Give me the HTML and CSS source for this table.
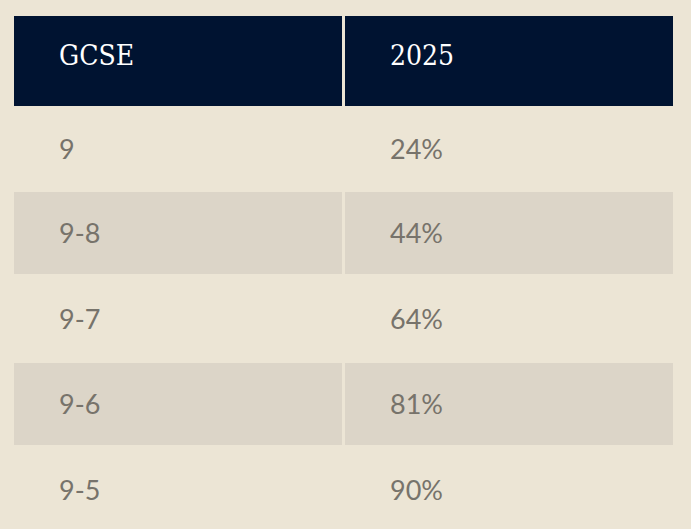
FILE: index.html
```html
<!DOCTYPE html>
<html lang="en">
<head>
<meta charset="utf-8">
<title>GCSE results</title>
<link rel="stylesheet" href="styles.css">
</head>
<body>
<div class="results">
  <div class="cell head">GCSE</div>
  <div class="cell head">2025</div>

  <div class="cell">9</div>
  <div class="cell">24%</div>

  <div class="cell shade">9-8</div>
  <div class="cell shade">44%</div>

  <div class="cell">9-7</div>
  <div class="cell">64%</div>

  <div class="cell shade">9-6</div>
  <div class="cell shade">81%</div>

  <div class="cell">9-5</div>
  <div class="cell">90%</div>
</div>
</body>
</html>
```

FILE: styles.css
```css
html, body {
  background: #ece5d5;
}

body {
  margin: 8px;
  overflow: hidden;
}

.results {
  display: grid;
  grid-template-columns: 328px 328px;
  grid-template-rows: 90px 86px 82px 89px 82px 90px;
  column-gap: 3px;
  padding: 8px 6px 0;
}

.cell {
  display: flex;
  align-items: center;
  padding-left: 45px;
  font-family: "Lato", "Open Sans", sans-serif;
  font-size: 27px;
  line-height: 30px;
  color: #77736b;
}

.shade {
  background: #dcd5c8;
}

.head {
  align-items: flex-start;
  padding-top: 25px;
  background: #001331;
  color: #ffffff;
  font-family: "DejaVu Serif Condensed", "DejaVu Serif", serif;
  font-stretch: condensed;
  font-size: 28px;
}
```
